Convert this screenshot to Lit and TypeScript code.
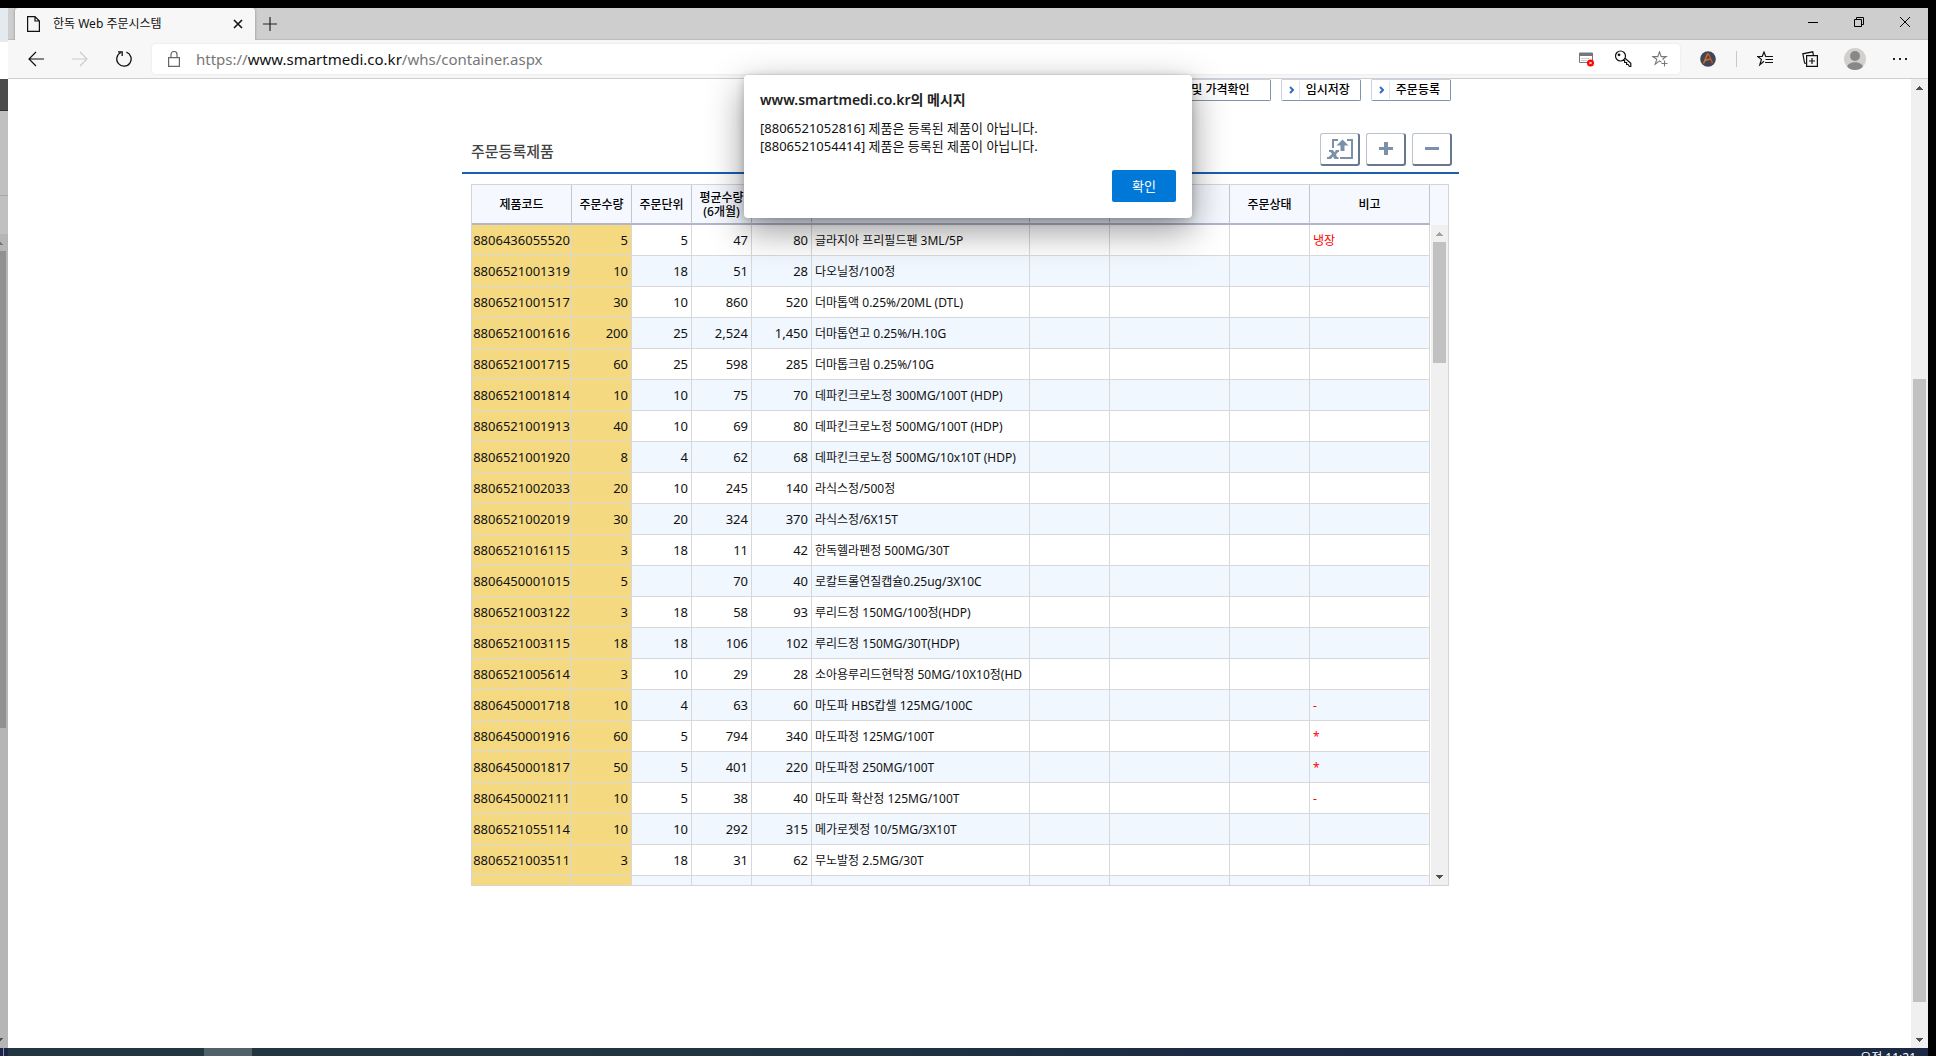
import { LitElement, html, css, svg, nothing } from "lit";
import { customElement, property } from "lit/decorators.js";

interface Product {
  code: string;
  qty: string;
  unit: string;
  avg: string;
  stock: string;
  name: string;
  note?: string;
}

const p = (code: string, qty: string, unit: string, avg: string, stock: string, name: string, note = ""): Product => ({
  code, qty, unit, avg, stock, name, note,
});

const PRODUCTS: Product[] = [
  p("8806436055520", "5", "5", "47", "80", "글라지아 프리필드펜 3ML/5P", "냉장"),
  p("8806521001319", "10", "18", "51", "28", "다오닐정/100정"),
  p("8806521001517", "30", "10", "860", "520", "더마톱액 0.25%/20ML (DTL)"),
  p("8806521001616", "200", "25", "2,524", "1,450", "더마톱연고 0.25%/H.10G"),
  p("8806521001715", "60", "25", "598", "285", "더마톱크림 0.25%/10G"),
  p("8806521001814", "10", "10", "75", "70", "데파킨크로노정 300MG/100T (HDP)"),
  p("8806521001913", "40", "10", "69", "80", "데파킨크로노정 500MG/100T (HDP)"),
  p("8806521001920", "8", "4", "62", "68", "데파킨크로노정 500MG/10x10T (HDP)"),
  p("8806521002033", "20", "10", "245", "140", "라식스정/500정"),
  p("8806521002019", "30", "20", "324", "370", "라식스정/6X15T"),
  p("8806521016115", "3", "18", "11", "42", "한독헬라펜정 500MG/30T"),
  p("8806450001015", "5", "", "70", "40", "로칼트롤연질캡슐0.25ug/3X10C"),
  p("8806521003122", "3", "18", "58", "93", "루리드정 150MG/100정(HDP)"),
  p("8806521003115", "18", "18", "106", "102", "루리드정 150MG/30T(HDP)"),
  p("8806521005614", "3", "10", "29", "28", "소아용루리드현탁정 50MG/10X10정(HD"),
  p("8806450001718", "10", "4", "63", "60", "마도파 HBS캅셀 125MG/100C", "-"),
  p("8806450001916", "60", "5", "794", "340", "마도파정 125MG/100T", "*"),
  p("8806450001817", "50", "5", "401", "220", "마도파정 250MG/100T", "*"),
  p("8806450002111", "10", "5", "38", "40", "마도파 확산정 125MG/100T", "-"),
  p("8806521055114", "10", "10", "292", "315", "메가로젯정 10/5MG/3X10T"),
  p("8806521003511", "3", "18", "31", "62", "무노발정 2.5MG/30T"),
  p("", "", "", "", "", ""),
];

const base = css`
  :host, *, *::before, *::after { box-sizing: border-box; }
  button { font: inherit; color: inherit; border: 0; background: none; padding: 0; margin: 0; }
  svg { display: block; flex: none; }
`;

/** Classic scroll bar: two arrow buttons and a thumb placed by proportion. */
@customElement("scroll-bar")
export class ScrollBar extends LitElement {
  @property({ type: Number }) before = 0;
  @property({ type: Number }) size = 1;
  @property({ type: Number }) after = 0;

  static styles = [base, css`
    :host { display: flex; flex-direction: column; flex: none; width: 17px; background: var(--track, #f0f0f0); }
    .arrow { width: 17px; height: 17px; flex: none; }
    .up { color: var(--up, #505050); }
    .down { color: #505050; }
    .track { flex: 1; display: flex; flex-direction: column; padding: 0 2px; min-height: 0; }
    .thumb { background: var(--thumb, #c1c1c1); }
  `];

  render() {
    return html`
      <svg class="arrow up" viewBox="0 0 17 17" shape-rendering="crispEdges"><path d="M5 11h7v-1h-1v-1h-1v-1h-1v-1h-1v1h-1v1h-1v1h-1z" fill="currentColor"/></svg>
      <div class="track">
        <div style="flex:${this.before} 0 0"></div>
        <div class="thumb" style="flex:${this.size} 0 0"></div>
        <div style="flex:${this.after} 0 0"></div>
      </div>
      <svg class="arrow down" viewBox="0 0 17 17" shape-rendering="crispEdges"><path d="M5 7h7v1h-1v1h-1v1h-1v1h-1v-1h-1v-1h-1v-1h-1z" fill="currentColor"/></svg>
    `;
  }
}

/** Tab strip and address bar of the browser. */
@customElement("browser-chrome")
export class BrowserChrome extends LitElement {
  static styles = [base, css`
    :host { display: block; font-family: "Noto Sans", "Noto Sans CJK KR", sans-serif; color: #111; }
    .strip { display: flex; height: 32px; background: #cecece; padding-left: 7px; border-bottom: 1px solid #bdbdbd; }
    .tab { display: flex; align-items: center; width: 240px; height: 32px; padding: 0 10px 0 12px; background: #f7f7f7; border-radius: 3px 3px 0 0; box-shadow: 0 0 3px rgba(0, 0, 0, 0.35); clip-path: inset(0 -4px 0 -4px); }
    .title { flex: 1; margin-left: 13px; font-size: 12px; line-height: 16px; white-space: nowrap; }
    .new { display: flex; align-items: center; padding: 0 8px; }
    .window { display: flex; margin-left: auto; }
    .window button { display: flex; width: 46px; height: 28px; align-items: center; justify-content: center; }
    .bar { display: flex; align-items: center; height: 39px; background: #f7f7f7; border-bottom: 1px solid #cfcfcf; padding: 0 12px; }
    .nav { display: flex; gap: 12px; }
    .icon { display: flex; width: 32px; height: 32px; align-items: center; justify-content: center; }
    .address { flex: 1; display: flex; align-items: center; height: 30px; margin-left: 12px; padding: 0 4px 0 16px; background: #fff; border-radius: 4px; box-shadow: 0 0 3px rgba(0, 0, 0, 0.08); }
    .url { flex: 1; margin-left: 16px; font-size: 15px; line-height: 20px; color: #777; text-decoration: none; white-space: nowrap; }
    .host { color: #111; }
    .inner { display: flex; gap: 5px; }
    .tools { display: flex; align-items: center; margin-left: 12px; }
    .split { width: 1px; height: 16px; background: #c8c8c8; margin: 0 12px; }
    .set { display: flex; gap: 13px; }
  `];

  render() {
    return html`
      <div class="strip">
        <div class="tab">
          <svg width="13" height="16" viewBox="0 0 13 16" fill="none" stroke="#111" stroke-width="1.2"><path d="M.6.6h7.4l4.4 4.4v10.4H.6zM8 .6V5h4.4"/></svg>
          <span class="title">한독 Web 주문시스템</span>
          <button aria-label="탭 닫기"><svg width="14" height="14" viewBox="0 0 14 14" stroke="#111" stroke-width="1.6"><path d="M3 3l8 8M11 3l-8 8"/></svg></button>
        </div>
        <button class="new" aria-label="새 탭"><svg width="14" height="14" viewBox="0 0 14 14" stroke="#222" stroke-width="1.2"><path d="M7 0v14M0 7h14"/></svg></button>
        <div class="window">
          <button aria-label="최소화"><svg width="10" height="10" viewBox="0 0 10 10" stroke="#000"><path d="M0 5.5h10"/></svg></button>
          <button aria-label="이전 크기로"><svg width="10" height="10" viewBox="0 0 10 10" fill="none" stroke="#000"><path d="M.5 2.5h7v7h-7zM2.5 2.5v-2h7v7h-2"/></svg></button>
          <button aria-label="닫기"><svg width="10" height="10" viewBox="0 0 10 10" stroke="#000"><path d="M0 0l10 10M10 0L0 10"/></svg></button>
        </div>
      </div>
      <div class="bar">
        <div class="nav">
          <button class="icon" aria-label="뒤로"><svg width="16" height="16" viewBox="0 0 16 16" fill="none" stroke="#111" stroke-width="1.2"><path d="M16 8H1M8 1L1 8l7 7"/></svg></button>
          <button class="icon" aria-label="앞으로" disabled><svg width="16" height="16" viewBox="0 0 16 16" fill="none" stroke="#ccc" stroke-width="1.2"><path d="M0 8h15M8 1l7 7-7 7"/></svg></button>
          <button class="icon" aria-label="새로 고침"><svg width="16" height="16" viewBox="0 0 16 16" fill="none" stroke="#111" stroke-width="1.3"><path d="M10.400 1.200A7.200 7.200 0 1 1 4.800 1.500M2 .8h4.200v4.200"/></svg></button>
        </div>
        <div class="address">
          <svg width="12" height="16" viewBox="0 0 12 16" fill="none" stroke="#666" stroke-width="1.2"><path d="M.6 6.600h10.800v8.800H.6zM3 6.600V3.500a3 3 0 0 1 6 0v3.100"/></svg>
          <a class="url" href="#">https://<span class="host">www.smartmedi.co.kr</span>/whs/container.aspx</a>
          <div class="inner">
            <button class="icon" aria-label="팝업 차단됨"><svg width="16" height="16" viewBox="0 0 16 16"><path d="M1.500 2h13v9.500h-13z" fill="#fff" stroke="#777"/><path d="M1 2h14v3H1z" fill="#777"/><path d="M3 7.500h8M3 9.500h6" stroke="#ccc"/><circle cx="12.500" cy="12" r="3.500" fill="#f00"/><path d="M11.300 10.800l2.400 2.400M13.700 10.800l-2.400 2.400" stroke="#fff"/></svg></button>
            <button class="icon" aria-label="암호"><svg width="18" height="18" viewBox="0 0 18 18" fill="none" stroke="#111" stroke-width="1.200"><circle cx="6.500" cy="6" r="5"/><circle cx="5" cy="4.800" r=".8" fill="#111"/><path d="M8.800 10.500h1.800v2h2v2h1.600l1.200 2h1.400v-3.200L11 8.200"/></svg></button>
            <button class="icon" aria-label="즐겨찾기에 추가"><svg width="16" height="16" viewBox="0 0 16 16" fill="none" stroke="#777" stroke-width="1.100"><path d="M9.500 11.200L7.500 9.900 3.200 13.200 4.800 8.200.8 5.600h5L7.500.8l1.700 4.800h5L11 7.800l.4 1.400M12.500 9.500v6M9.500 12.500h6"/></svg></button>
          </div>
        </div>
        <div class="tools">
          <button class="icon" aria-label="확장"><svg width="16" height="16" viewBox="0 0 16 16" fill="none"><circle cx="8" cy="8" r="7.800" fill="#414558"/><path d="M3.500 12.500L7.600 3l1.200.2M5 9.500l6-1.800" stroke="#d8731f" stroke-width="1.400"/><path d="M8.800 3.200l3.700 9" stroke="#c8522a" stroke-width="1.400"/></svg></button>
          <div class="split"></div>
          <div class="set">
            <button class="icon" aria-label="즐겨찾기"><svg width="16" height="16" viewBox="0 0 16 16" fill="none" stroke="#111" stroke-width="1.200"><path d="M7 10.200l-4.200 3.500 1.600-5.300L.8 5.500h4.400L7 1l1.700 4.500H16M8.500 8.500H16M8 11.500h8"/></svg></button>
            <button class="icon" aria-label="컬렉션"><svg width="16" height="16" viewBox="0 0 16 16" fill="none" stroke="#111" stroke-width="1.200"><path d="M4.600 4.600h10.800v10.800H4.600zM10 7v6M7 10h6M4.500 12.500L2.600 12 .8 2.800 10.800.8l.6 3.500"/></svg></button>
            <button class="icon" aria-label="프로필"><svg width="22" height="22" viewBox="0 0 22 22"><circle cx="11" cy="11" r="11" fill="#d2d0ce"/><circle cx="11" cy="8" r="5" fill="#8a8886"/><path d="M3.200 18.700c1-6 14.600-6 15.600 0a11 11 0 0 1-15.600 0z" fill="#8a8886"/></svg></button>
            <button class="icon" aria-label="설정 및 기타"><svg width="16" height="16" viewBox="0 0 16 16" fill="#222"><path d="M1 7h2v2H1zM7 7h2v2H7zM13 7h2v2h-2z"/></svg></button>
          </div>
        </div>
      </div>
    `;
  }
}

/** Scrollable list of the ordered products. */
@customElement("order-grid")
export class OrderGrid extends LitElement {
  static styles = [base, css`
    :host { display: flex; height: 702px; border: 1px solid #d5d5d5; font-family: "Noto Sans", "Noto Sans CJK KR", sans-serif; color: #111; }
    .view { flex: 1; min-width: 0; overflow: hidden; }
    table { width: 100%; table-layout: fixed; border-collapse: separate; border-spacing: 0; }
    .w-code { width: 100px; }
    .w-num { width: 60px; }
    .w-mid { width: 80px; }
    .w-wide { width: 120px; }
    th { height: 40px; padding: 2px 0 0; font-size: 12px; line-height: 14px; font-weight: 500; background: #f5f9ff; border-right: 1px solid #c3c6cc; border-bottom: 2px solid #b0b6c8; color: #000; }
    td { height: 31px; padding: 2px 3px 0; font-size: 12px; line-height: 18px; overflow: hidden; white-space: nowrap; border-right: 1px solid #d8d8d8; border-bottom: 1px solid #d8d8d8; }
    td.num { padding-top: 0; font-size: 13px; text-align: right; }
    td.name { padding-right: 0; }
    tr:nth-child(even) td { background: #f0f7fe; }
    tbody tr td.key { background: #f5d981; }
    td.code { padding: 0; text-align: center; }
    .note { color: #f00; }
    .side { display: flex; flex-direction: column; width: 18px; padding-left: 1px; }
    .cap { height: 40px; margin-left: -1px; background: #f5f9ff; }
    scroll-bar { flex: 1; --up: #a3a3a3; }
  `];

  render() {
    return html`
      <div class="view">
        <table>
          <colgroup>
            <col class="w-code"><col class="w-num"><col class="w-num"><col class="w-num"><col class="w-num">
            <col><col class="w-mid"><col class="w-wide"><col class="w-mid"><col class="w-wide">
          </colgroup>
          <thead>
            <tr>
              <th>제품코드</th><th>주문수량</th><th>주문단위</th><th>평균수량<br>(6개월)</th>
              <th></th><th></th><th></th><th></th><th>주문상태</th><th>비고</th>
            </tr>
          </thead>
          <tbody>
            ${PRODUCTS.map((r) => html`
              <tr>
                <td class="key num code">${r.code}</td>
                <td class="key num">${r.qty}</td>
                <td class="num">${r.unit}</td>
                <td class="num">${r.avg}</td>
                <td class="num">${r.stock}</td>
                <td class="name">${r.name}</td>
                <td></td><td></td><td></td>
                <td class="note">${r.note || nothing}</td>
              </tr>`)}
          </tbody>
        </table>
      </div>
      <div class="side">
        <div class="cap"></div>
        <scroll-bar before="0" size="121" after="505"></scroll-bar>
      </div>
    `;
  }
}

const chevron = svg`<path d="M1 1l3 3-3 3" fill="none" stroke="#2f6fc4" stroke-width="2"/>`;

/** The order form: actions, section heading and product grid. */
@customElement("order-page")
export class OrderPage extends LitElement {
  static styles = [base, css`
    :host { display: block; background: #fff; padding-left: 2px; font-family: "Noto Sans", "Noto Sans CJK KR", sans-serif; }
    .panel { max-width: 997px; margin: 0 auto; }
    .actions { display: flex; justify-content: flex-end; gap: 10px; padding-right: 8px; }
    .action { display: flex; align-items: center; height: 22px; padding: 0 10px 0 7px; border: 1px solid #c9d3e0; border-right-color: #7f93ab; border-bottom-color: #7f93ab; border-radius: 2px; background: #fff; font-size: 12px; line-height: 18px; font-weight: 500; color: #000; }
    .action.check { padding: 0 20px 0 130px; }
    .mark { display: flex; align-items: center; height: 18px; padding-right: 5px; margin-right: 6px; border-right: 1px solid #dfe5ee; }
    .head { display: flex; justify-content: space-between; height: 41px; margin-top: 32px; padding: 0 7px 0 9px; border-bottom: 2px solid #1a5fb0; }
    h2 { margin: 0; font-size: 15px; line-height: 36px; font-weight: 500; color: #444; }
    .tools { display: flex; gap: 6px; }
    .tool { display: flex; align-items: center; justify-content: center; width: 40px; height: 33px; border: 1px solid #b9c2cd; border-right: 2px solid #66798f; border-bottom: 2px solid #66798f; border-radius: 3px; background: #fff; }
    order-grid { margin: 10px 10px 0 9px; }
  `];

  render() {
    const mark = html`<span class="mark"><svg width="5" height="8" viewBox="0 0 5 8">${chevron}</svg></span>`;
    return html`
      <div class="panel">
        <div class="actions">
          <button class="action check">및 가격확인</button>
          <button class="action">${mark}임시저장</button>
          <button class="action">${mark}주문등록</button>
        </div>
        <div class="head">
          <h2>주문등록제품</h2>
          <div class="tools">
            <button class="tool" aria-label="엑셀 업로드"><svg width="26" height="20" viewBox="0 0 26 20" fill="#7a90ab"><path d="M5 0h6v2H7v7H5zM20 0h6v20H13v-2h11V2h-4zM15.500 .5l6 6h-4V12h-4V6.500h-4z"/><path d="M2 11h4l1.500 2.500L9 11h3v2h-1l-2 2.500 1 2.500h1.500v2H7.500L6 17.500 4 20H0v-2h1.500L5 15l-1.500-2H2z"/></svg></button>
            <button class="tool" aria-label="추가"><svg width="14" height="14" viewBox="0 0 14 14" fill="#7a90ab"><path d="M5 0h4v5h5v3H9v5H5V8H0V5h5z"/></svg></button>
            <button class="tool" aria-label="삭제"><svg width="14" height="14" viewBox="0 0 14 14" fill="#7a90ab"><path d="M0 5h14v3H0z"/></svg></button>
          </div>
        </div>
        <order-grid></order-grid>
      </div>
    `;
  }
}

@customElement("app-root")
export class AppRoot extends LitElement {
  static styles = [base, css`
    :host { display: flex; flex-direction: column; height: 100vh; overflow: hidden; background: #000; padding-top: 8px; font-family: "Noto Sans", "Noto Sans CJK KR", sans-serif; }
    .desktop { flex: 1; display: flex; min-height: 0; padding-right: 8px; }
    .behind { display: flex; flex-direction: column; align-items: flex-end; width: 8px; flex: none; overflow: hidden; background: #c0c0c0; }
    .b-tab { width: 8px; height: 34px; background: #e5eaee; }
    .b-bar { width: 8px; height: 37px; background: #fff; }
    .b-head { width: 8px; height: 32px; background: #4b4b4b; border-bottom: 1px solid #333; }
    .b-body { width: 8px; height: 85px; border-bottom: 1px solid #a8a8a8; }
    .b-gap { height: 38px; }
    .behind scroll-bar { flex: 1; --track: #b5b5b5; --thumb: #919191; --up: #777; }
    .window { position: relative; flex: 1; display: flex; flex-direction: column; min-width: 0; background: #fff; }
    .page { flex: 1; display: flex; min-height: 0; }
    order-page { flex: 1; min-width: 0; overflow: hidden; }
    .dialog { position: absolute; top: 67px; left: 50%; margin: 0; transform: translateX(-50%); width: 448px; padding: 16px; border: 0; border-radius: 4px; background: #fff; color: #111; display: flex; flex-direction: column; box-shadow: 0 12px 36px rgba(0, 0, 0, 0.42), 0 2px 8px rgba(0, 0, 0, 0.2); }
    .dialog h1 { margin: 0; font-size: 14px; line-height: 18px; font-weight: 600; color: #222; }
    .dialog p { margin: 10px 0 15px; font-size: 13px; line-height: 18px; }
    .ok { align-self: flex-end; width: 64px; height: 32px; border-radius: 2px; background: #0078d7; color: #fff; font-size: 13px; line-height: 30px; }
    .taskbar { display: flex; height: 8px; flex: none; overflow: hidden; background: linear-gradient(90deg, #22363f 0%, #22363f 30%, #1b2945 70%); margin-right: 8px; }
    .peek { width: 8px; background: #1a2447; border-left: 3px solid #1a2447; }
    .peek::before { content: ""; display: block; width: 1px; height: 8px; background: #8791ad; }
    .active { width: 48px; margin-left: 196px; background: #50616a; }
    .clock { margin: 2px 12px 0 auto; font-size: 12px; line-height: 16px; color: #fff; }
  `];

  render() {
    return html`
      <div class="desktop">
        <div class="behind">
          <div class="b-tab"></div><div class="b-bar"></div><div class="b-head"></div><div class="b-body"></div><div class="b-gap"></div>
          <scroll-bar before="0" size="476" after="303"></scroll-bar>
        </div>
        <div class="window">
          <browser-chrome></browser-chrome>
          <div class="page">
            <order-page></order-page>
            <scroll-bar before="283" size="623" after="29"></scroll-bar>
          </div>
          <div class="dialog" role="alertdialog" aria-labelledby="dialog-title">
            <h1 id="dialog-title">www.smartmedi.co.kr의 메시지</h1>
            <p>[8806521052816] 제품은 등록된 제품이 아닙니다.<br>[8806521054414] 제품은 등록된 제품이 아닙니다.</p>
            <button class="ok">확인</button>
          </div>
        </div>
      </div>
      <div class="taskbar">
        <div class="peek"></div>
        <div class="active"></div>
        <div class="clock">오전 11:21</div>
      </div>
    `;
  }
}
